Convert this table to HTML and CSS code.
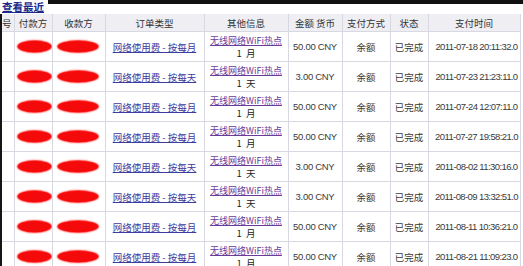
FILE: index.html
```html
<!DOCTYPE html>
<html lang="zh-CN">
<head>
<meta charset="utf-8">
<title>查看最近</title>
<link rel="stylesheet" href="styles.css">
</head>
<body>
<div class="titlebar">
  <a class="title-link" href="#">查看最近</a>
  <div class="topband"></div>
</div>
<div class="wrap">
<table class="grid">
  <colgroup>
    <col class="c-no"><col class="c-payer"><col class="c-payee"><col class="c-type"><col class="c-info"><col class="c-amt"><col class="c-method"><col class="c-state"><col class="c-time">
  </colgroup>
  <thead>
    <tr>
      <th class="no">号</th><th>付款方</th><th>收款方</th><th>订单类型</th><th>其他信息</th><th>金额 货币</th><th>支付方式</th><th>状态</th><th>支付时间</th>
    </tr>
  </thead>
  <tbody>
    <tr><td></td><td><span class="blot b1"></span></td><td><span class="blot b2"></span></td><td><a class="order" href="#">网络使用费 - 按每月</a></td><td><a class="info" href="#">无线网络WiFi热点</a><div class="dur">1 月</div></td><td class="num">50.00 CNY</td><td>余额</td><td>已完成</td><td class="num time">2011-07-18 20:11:32.0</td></tr>
    <tr><td></td><td><span class="blot b1"></span></td><td><span class="blot b2"></span></td><td><a class="order" href="#">网络使用费 - 按每天</a></td><td><a class="info" href="#">无线网络WiFi热点</a><div class="dur">1 天</div></td><td class="num">3.00 CNY</td><td>余额</td><td>已完成</td><td class="num time">2011-07-23 21:23:11.0</td></tr>
    <tr><td></td><td><span class="blot b1"></span></td><td><span class="blot b2"></span></td><td><a class="order" href="#">网络使用费 - 按每月</a></td><td><a class="info" href="#">无线网络WiFi热点</a><div class="dur">1 月</div></td><td class="num">50.00 CNY</td><td>余额</td><td>已完成</td><td class="num time">2011-07-24 12:07:11.0</td></tr>
    <tr><td></td><td><span class="blot b1"></span></td><td><span class="blot b2"></span></td><td><a class="order" href="#">网络使用费 - 按每月</a></td><td><a class="info" href="#">无线网络WiFi热点</a><div class="dur">1 月</div></td><td class="num">50.00 CNY</td><td>余额</td><td>已完成</td><td class="num time">2011-07-27 19:58:21.0</td></tr>
    <tr><td></td><td><span class="blot b1"></span></td><td><span class="blot b2"></span></td><td><a class="order" href="#">网络使用费 - 按每天</a></td><td><a class="info" href="#">无线网络WiFi热点</a><div class="dur">1 天</div></td><td class="num">3.00 CNY</td><td>余额</td><td>已完成</td><td class="num time">2011-08-02 11:30:16.0</td></tr>
    <tr><td></td><td><span class="blot b1"></span></td><td><span class="blot b2"></span></td><td><a class="order" href="#">网络使用费 - 按每天</a></td><td><a class="info" href="#">无线网络WiFi热点</a><div class="dur">1 天</div></td><td class="num">3.00 CNY</td><td>余额</td><td>已完成</td><td class="num time">2011-08-09 13:32:51.0</td></tr>
    <tr><td></td><td><span class="blot b1"></span></td><td><span class="blot b2"></span></td><td><a class="order" href="#">网络使用费 - 按每月</a></td><td><a class="info" href="#">无线网络WiFi热点</a><div class="dur">1 月</div></td><td class="num">50.00 CNY</td><td>余额</td><td>已完成</td><td class="num time">2011-08-11 10:36:21.0</td></tr>
    <tr><td></td><td><span class="blot b1"></span></td><td><span class="blot b2"></span></td><td><a class="order" href="#">网络使用费 - 按每月</a></td><td><a class="info" href="#">无线网络WiFi热点</a><div class="dur">1 月</div></td><td class="num">50.00 CNY</td><td>余额</td><td>已完成</td><td class="num time">2011-08-21 11:09:23.0</td></tr>
  </tbody>
</table>
</div>
</body>
</html>
```

FILE: styles.css
```css
html, body {
  margin: 0;
  padding: 0;
  background: #ffffff;
  overflow: hidden;
}
body {
  width: 523px;
  height: 266px;
  font-family: "Noto Sans CJK SC", "Liberation Sans", sans-serif;
  font-size: 9.5px;
  color: #3a3a3a;
}
.titlebar {
  display: flex;
  align-items: flex-start;
  height: 14px;
}
.title-link {
  font-weight: bold;
  font-size: 10.5px;
  line-height: 13px;
  color: #1a2a8c;
  text-decoration: underline;
  padding-left: 2px;
}
.topband {
  flex: 1;
  height: 4px;
  margin-left: 4px;
  background: #111111;
}
.wrap {
  border-left: 2px solid #151515;
  height: 252px;
  overflow: hidden;
}
.grid {
  border-collapse: collapse;
  table-layout: fixed;
  width: 518px;
}
.c-no { width: 12px; }
.c-payer { width: 38px; }
.c-payee { width: 53px; }
.c-type { width: 99px; }
.c-info { width: 84px; }
.c-amt { width: 54px; }
.c-method { width: 48px; }
.c-state { width: 38px; }
.c-time { width: 92px; }
.grid th, .grid td {
  border: 1px solid #d8d8e2;
  text-align: center;
  vertical-align: middle;
  padding: 0;
  overflow: hidden;
  white-space: nowrap;
}
.grid th {
  background: #eeeef3;
  font-weight: normal;
  height: 17px;
  line-height: 12px;
  color: #333;
}
.grid thead th { border-top: none; }
.grid tr > :first-child { border-left: none; }
.grid th.no { text-align: left; }
.grid td {
  height: 29px;
  line-height: 12px;
}
.blot {
  display: block;
  height: 11px;
  border-radius: 50%;
  background: #f40a0a;
  box-shadow: 0 0 1.5px 1px #ff2020;
}
.b1 { width: 33px; margin-left: 3px; }
.b2 { width: 40px; margin-left: 5px; }
a.order {
  color: #3b3ba0;
  text-decoration: underline;
}
a.info {
  display: block;
  color: #6a3a9a;
  text-decoration: underline;
  font-size: 9px;
  line-height: 12px;
}
.dur {
  color: #222;
  line-height: 12px;
  word-spacing: 2px;
}
.num {
  font-family: "Liberation Sans", Arial, sans-serif;
  font-size: 9.5px;
  letter-spacing: -0.3px;
}
.time {
  letter-spacing: -0.6px;
  font-size: 9.5px;
  text-align: left;
  padding-left: 5px !important;
}
```
